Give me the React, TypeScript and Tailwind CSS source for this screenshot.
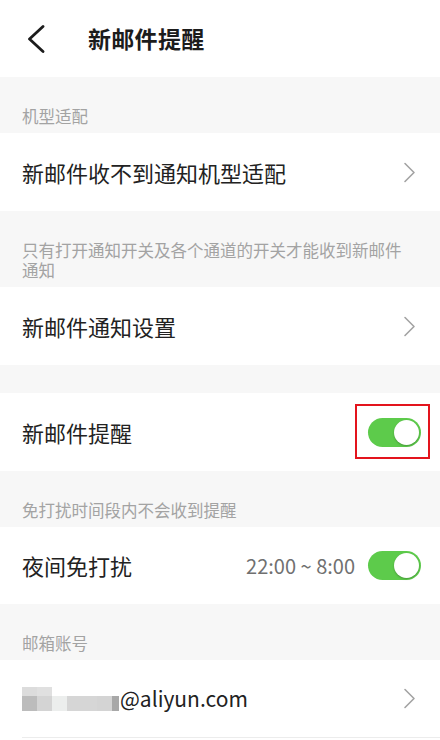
import React from "react";

const font = { fontFamily: '"Noto Sans CJK SC", "Noto Sans", sans-serif' };

function Chevron() {
  return (
    <svg width="13" height="21" viewBox="0 0 13 21" fill="none" className="shrink-0">
      <path d="M2 1.5 L11 10.5 L2 19.5" stroke="#a3a3a3" strokeWidth="1.6" strokeLinecap="round" strokeLinejoin="round" />
    </svg>
  );
}

function Toggle() {
  return (
    <div className="w-[53px] h-[29px] rounded-full bg-[#5dcb4b] flex items-center justify-end pr-[2px] shrink-0">
      <div className="w-[25px] h-[25px] rounded-full bg-white shadow-[0_1px_2px_rgba(0,0,0,0.25)]" />
    </div>
  );
}

// grey section caption; line spacing follows the reference (about 20px)
function Label({ children }: { children: React.ReactNode }) {
  return (
    <div className="bg-[#f7f7f7] pl-[22px] pr-[22px] pt-[29px] pb-[7px] text-[16.5px] leading-[20px] text-[#a3a3a3]">
      {children}
    </div>
  );
}

function LinkRow({ children }: { children: React.ReactNode }) {
  return (
    <div className="bg-white h-[78px] flex items-center justify-between pl-[22px] pr-[24px]">
      <span className="text-[22px] text-[#222222]">{children}</span>
      <Chevron />
    </div>
  );
}

const blur = [
  ["#dcdcdc", "#e0e0e0", "#ffffff", "#ffffff", "#ffffff", "#ffffff", "#ffffff"],
  ["#bcbcbc", "#d4d4d4", "#eceeed", "#d6d6d6", "#d6d6d6", "#d4d4d4", "#a8a8a8"],
];

export default function App() {
  return (
    <div className="w-[440px] h-[740px] overflow-hidden bg-white" style={font}>
      {/* header */}
      <div className="h-[77px] flex items-center pl-[27px]">
        <svg width="18" height="28" viewBox="0 0 18 28" fill="none">
          <path d="M16 1.5 L2.5 14 L16 26.5" stroke="#1c1c1c" strokeWidth="2.8" strokeLinecap="round" strokeLinejoin="round" />
        </svg>
        <h1 className="ml-[43px] text-[23px] font-bold text-[#1c1c1c] tracking-[0.3px]">新邮件提醒</h1>
      </div>

      <Label>机型适配</Label>
      <LinkRow>新邮件收不到通知机型适配</LinkRow>

      <Label>
        只有打开通知开关及各个通道的开关才能收到新邮件
        <br />
        通知
      </Label>
      <LinkRow>新邮件通知设置</LinkRow>

      <div className="bg-[#f7f7f7] h-[28px]" />

      <div className="relative bg-white h-[78px] flex items-center justify-between pl-[22px] pr-[19px]">
        <span className="text-[22px] text-[#222222]">新邮件提醒</span>
        <Toggle />
        <div className="absolute left-[355px] top-[11px] w-[75px] h-[55px] border-2 border-[#e3141d]" />
      </div>

      <Label>免打扰时间段内不会收到提醒</Label>
      <div className="bg-white h-[77px] flex items-center pl-[22px] pr-[19px]">
        <span className="text-[22px] text-[#222222]">夜间免打扰</span>
        <span className="ml-auto mr-[13px] text-[20px] text-[#707070]">22:00 ~ 8:00</span>
        <Toggle />
      </div>

      <Label>邮箱账号</Label>
      <div className="bg-white h-[77px] flex items-center justify-between pl-[22px] pr-[24px]">
        <div className="flex items-center">
          <div className="flex flex-col">
            {blur.map((row, i) => (
              <div key={i} className="flex">
                {row.map((c, j) => (
                  <div
                    key={j}
                    className={j === 6 ? "w-[7px]" : "w-[15px]"}
                    style={{ backgroundColor: c, height: i === 0 ? 9 : 15 }}
                  />
                ))}
              </div>
            ))}
          </div>
          <span className="text-[21px] text-[#222222] ml-[1px]">@aliyun.com</span>
        </div>
        <Chevron />
      </div>
      <div className="ml-[22px] h-px bg-[#ececec]" />
    </div>
  );
}
